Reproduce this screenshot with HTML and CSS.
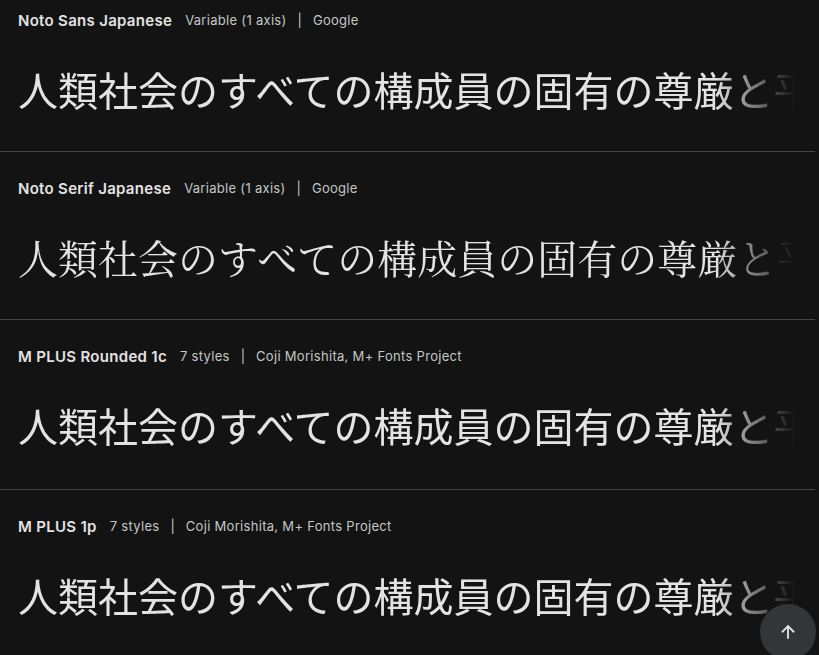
FILE: index.html
```html
<!DOCTYPE html>
<html lang="ja">
<head>
<meta charset="utf-8">
<title>Japanese fonts</title>
<link rel="stylesheet" href="styles.css">
</head>
<body>
<main class="list">
  <article class="card card--first">
    <header class="card-head">
      <span class="name">Noto Sans Japanese</span>
      <span class="meta">Variable (1 axis)</span>
      <span class="sep">|</span>
      <span class="meta">Google</span>
    </header>
    <div class="sample sample--sans">人類社会のすべての構成員の固有の尊厳と平等で譲ることのできない権利</div>
  </article>
  <article class="card">
    <header class="card-head">
      <span class="name">Noto Serif Japanese</span>
      <span class="meta">Variable (1 axis)</span>
      <span class="sep">|</span>
      <span class="meta">Google</span>
    </header>
    <div class="sample sample--serif">人類社会のすべての構成員の固有の尊厳と平等で譲ることのできない権利</div>
  </article>
  <article class="card card--tall">
    <header class="card-head">
      <span class="name">M PLUS Rounded 1c</span>
      <span class="meta">7 styles</span>
      <span class="sep">|</span>
      <span class="meta">Coji Morishita, M+ Fonts Project</span>
    </header>
    <div class="sample sample--sans">人類社会のすべての構成員の固有の尊厳と平等で譲ることのできない権利</div>
  </article>
  <article class="card">
    <header class="card-head">
      <span class="name">M PLUS 1p</span>
      <span class="meta">7 styles</span>
      <span class="sep">|</span>
      <span class="meta">Coji Morishita, M+ Fonts Project</span>
    </header>
    <div class="sample sample--sans">人類社会のすべての構成員の固有の尊厳と平等で譲ることのできない権利</div>
  </article>
</main>
<button class="to-top" aria-label="Back to top">
  <svg width="20" height="20" viewBox="0 0 24 24" aria-hidden="true"><path d="M12 19V5M5.5 11.5 12 5l6.5 6.5" fill="none" stroke="#e3e3e3" stroke-width="2.2" stroke-linecap="square"/></svg>
</button>
</body>
</html>
```
FILE: styles.css
```css
html, body {
  margin: 0;
  padding: 0;
  background: #131314;
  overflow: hidden;
}
body {
  font-family: Inter, "Noto Sans", sans-serif;
  color: #e3e3e3;
}
.list {
  width: 815px;
}
.card {
  padding: 26px 0 30px 18px;
  border-bottom: 1px solid #444746;
}
.card--first {
  padding-top: 10px;
}
.card--tall {
  padding-bottom: 32px;
}
.card-head {
  display: flex;
  align-items: center;
  height: 20px;
  white-space: nowrap;
}
.name {
  font-size: 15px;
  font-weight: 600;
  color: #e3e3e3;
  margin-right: 13px;
  letter-spacing: 0.3px;
}
.meta {
  font-size: 13px;
  color: #c4c7c5;
  letter-spacing: 0.3px;
}
.sep {
  font-size: 13px;
  color: #c4c7c5;
  margin: 0 11px;
}
.sample {
  margin-top: 27px;
  height: 64px;
  line-height: 64px;
  font-size: 40px;
  white-space: nowrap;
  overflow: hidden;
  color: #e3e3e3;
  -webkit-mask-image: linear-gradient(to right, #000 calc(100% - 100px), transparent calc(100% - 20px));
  mask-image: linear-gradient(to right, #000 calc(100% - 100px), transparent calc(100% - 20px));
}
.sample--sans {
  font-family: "Noto Sans CJK JP", sans-serif;
}
.sample--serif {
  font-family: "Noto Serif CJK JP", "Noto Serif JP", "Noto Sans CJK JP", serif;
}
.to-top {
  position: fixed;
  left: 760px;
  top: 604px;
  width: 56px;
  height: 56px;
  border-radius: 50%;
  border: none;
  background: #333537;
  display: flex;
  align-items: center;
  justify-content: center;
  padding: 0;
}
```
